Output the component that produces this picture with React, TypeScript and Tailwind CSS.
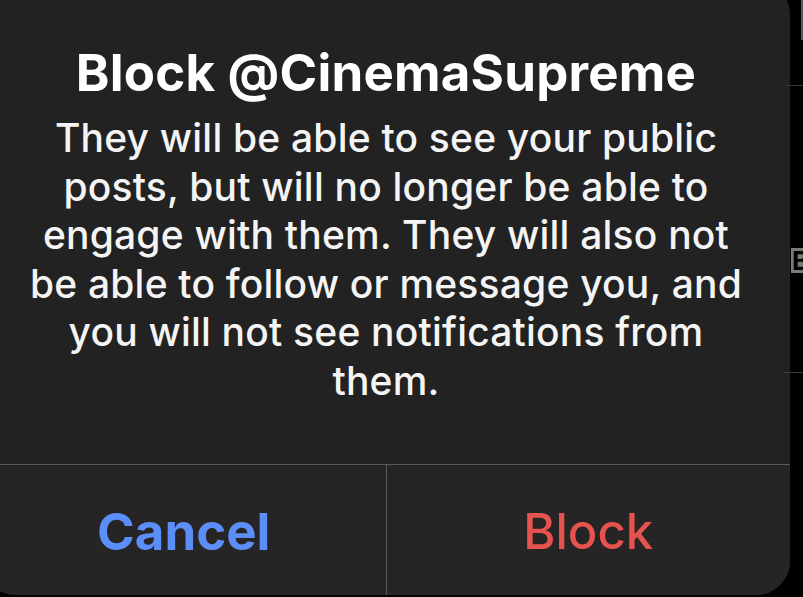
import React from 'react';

const bodyLines = [
  'They will be able to see your public',
  'posts, but will no longer be able to',
  'engage with them. They will also not',
  'be able to follow or message you, and',
  'you will not see notifications from',
  'them.',
];

const SideList = () => {
  return (
    <div className="flex flex-col w-[13px] shrink-0">
      <div className="flex h-[40px] justify-end">
        <div className="w-[2px] bg-[#55555a]" />
      </div>
      <div className="h-[45px]" />
      <div className="h-px bg-[#3a3a3c] ml-[-4px]" />
      <div className="h-[162px]" />
      <div className="h-[25px] ml-[1px] bg-[#7a7a7a] overflow-hidden">
        <span className="block text-[26px] leading-[25px] font-bold text-black pl-[1px]">B</span>
      </div>
      <div className="h-[99px]" />
      <div className="h-px bg-[#3a3a3c] ml-[-6px]" />
    </div>
  );
};

const App = () => {
  return (
    <div
      className="flex w-[803px] h-[597px] overflow-hidden bg-black"
      style={{ fontFamily: 'Inter, "Noto Sans", sans-serif' }}
    >
      <div className="flex flex-col shrink-0 w-[808px] h-[615px] ml-[-18px] mt-[-20px] rounded-[34px] bg-[#232222] overflow-hidden">
        <div className="flex flex-col items-center pt-[64px] h-[484px]">
          <h1 className="text-[51px] leading-[58px] font-bold text-white tracking-[0.2px]">
            Block @CinemaSupreme
          </h1>
          <p className="mt-[12px] text-[39px] leading-[48.5px] font-medium text-[#f4f4f4] text-center tracking-[0.2px]">
            {bodyLines.map((line) => (
              <span key={line} className="block">
                {line}
              </span>
            ))}
          </p>
        </div>
        <div className="h-px bg-[#5c5b5b]" />
        <div className="flex flex-1 bg-[#272425]">
          <button className="flex flex-1 items-center justify-center pt-[2px] text-[51px] leading-none font-bold text-[#5b8ef7]">
            Cancel
          </button>
          <div className="w-px bg-[#5c5b5b]" />
          <button className="flex flex-1 items-center justify-center pt-[2px] text-[49px] leading-none font-medium text-[#e5534e]">
            Block
          </button>
        </div>
      </div>
      <SideList />
    </div>
  );
};

export default App;
